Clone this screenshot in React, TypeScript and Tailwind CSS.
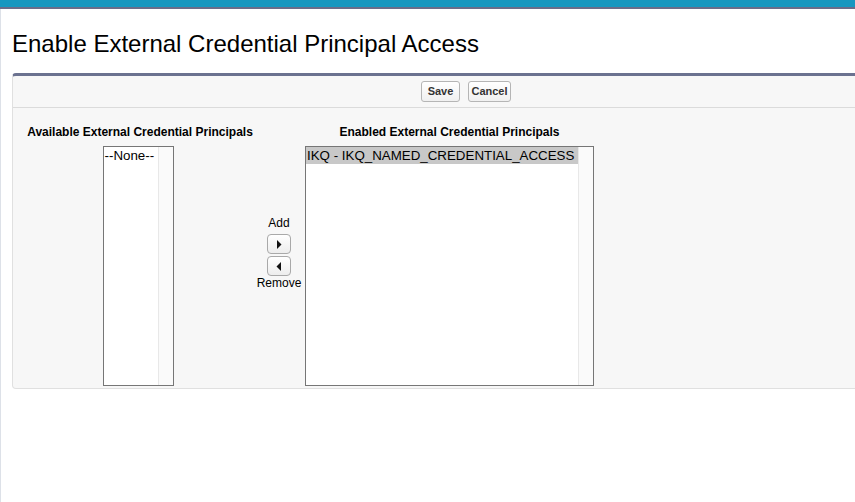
import React from "react";

const font = { fontFamily: '"Liberation Sans", Arial, sans-serif' };

function ListBox({ width, items, selected }: { width: string; items: string[]; selected?: boolean }) {
  return (
    <div className={`flex h-[240px] ${width} border border-[#767676] bg-white`}>
      <div className="flex-1 overflow-hidden">
        {items.map((item) => (
          <div
            key={item}
            className={`h-[17px] whitespace-nowrap pl-[1px] text-[13.33px] leading-[17px] text-black ${
              selected ? "bg-[#c8c8c8]" : ""
            }`}
          >
            {item}
          </div>
        ))}
      </div>
      <div className="w-[15px] border-l border-[#e8e8e8] bg-[#fafafa]" />
    </div>
  );
}

function ArrowButton({ dir }: { dir: "right" | "left" }) {
  return (
    <div className="flex h-[20px] w-[24px] items-center justify-center rounded-[4px] border border-[#a9a9a9] bg-gradient-to-b from-white to-[#ededed]">
      <svg width="6" height="9" viewBox="0 0 6 9">
        {dir === "right" ? (
          <polygon points="1,0 5.5,4.5 1,9" fill="#111" />
        ) : (
          <polygon points="5,0 0.5,4.5 5,9" fill="#111" />
        )}
      </svg>
    </div>
  );
}

function PageButton({ label, width }: { label: string; width: string }) {
  return (
    <div
      className={`flex h-[21px] ${width} items-center justify-center rounded-[3px] border border-[#b5b5b5] bg-gradient-to-b from-white to-[#f0f0f0] text-[11px] font-bold text-[#333]`}
    >
      {label}
    </div>
  );
}

export default function App() {
  return (
    <div className="h-[502px] w-[855px] overflow-hidden bg-white" style={font}>
      <div className="h-[7px] bg-[#1797c0]" />
      <div className="h-[2px] bg-[#6b6d8a]" />
      <div className="h-[493px] border-l border-[#dde1e8] pl-[11px]">
        <h1 className="pt-[21px] text-[24px] leading-[28px] text-black">
          Enable External Credential Principal Access
        </h1>

        <div className="-mr-[8px] mt-[15px] rounded-[4px] border border-t-[3px] border-[#e0e0e0] border-t-[#6b7290] bg-[#f7f7f7]">
          <div className="flex h-[32px] items-center gap-[8px] border-b border-[#dbdbdb] pl-[408px]">
            <PageButton label="Save" width="w-[39px]" />
            <PageButton label="Cancel" width="w-[43px]" />
          </div>

          <div className="flex items-stretch pb-[2px] pl-[14px] pt-[17px]">
            <div className="flex w-[226px] flex-col items-center">
              <div className="mb-[7px] text-[12px] font-bold leading-[14px] text-black">
                Available External Credential Principals
              </div>
              <div className="pr-[4px]">
                <ListBox width="w-[71px]" items={["--None--"]} />
              </div>
            </div>

            <div className="mt-[91px] flex w-[52px] flex-col items-center self-start text-[12px] leading-[14px] text-black">
              <div className="mb-[4px]">Add</div>
              <ArrowButton dir="right" />
              <div className="h-[2px]" />
              <ArrowButton dir="left" />
              <div>Remove</div>
            </div>

            <div className="flex w-[289px] flex-col items-center">
              <div className="mb-[7px] text-[12px] font-bold leading-[14px] text-black">
                Enabled External Credential Principals
              </div>
              <ListBox width="w-[289px]" items={["IKQ - IKQ_NAMED_CREDENTIAL_ACCESS"]} selected />
            </div>
          </div>
        </div>
      </div>
    </div>
  );
}
